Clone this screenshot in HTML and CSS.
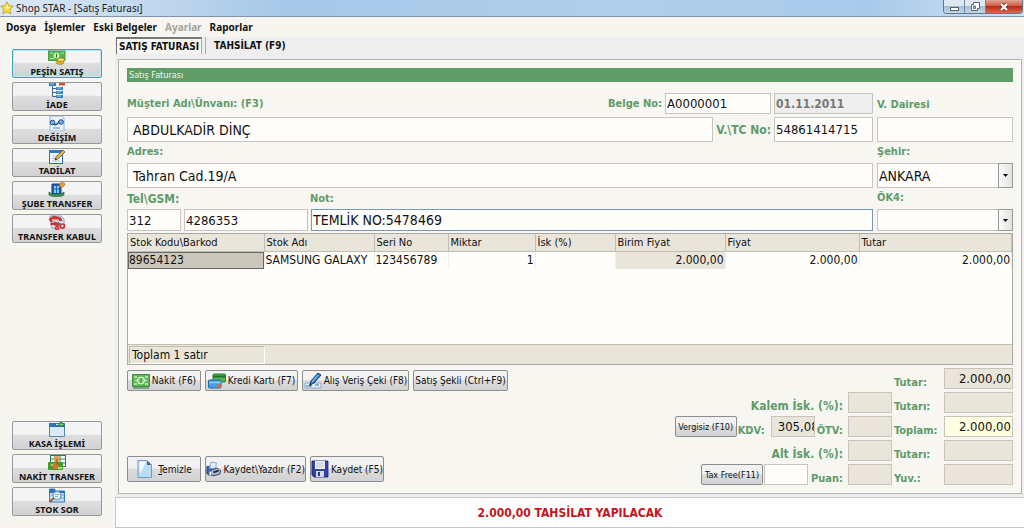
FILE: index.html
```html
<!DOCTYPE html>
<html lang="tr">
<head>
<meta charset="utf-8">
<title>Shop STAR - [Satış Faturası]</title>
<link rel="stylesheet" href="styles.css">
</head>
<body>
<div class="app">
  <header class="titlebar">
    <svg class="star" viewBox="0 0 14 14"><path d="M7 .8 8.900 4.700 13.300 5.200 10 8.400 10.900 12.900 6.800 10.800 2.800 12.800 3.600 8.300.6 5.200 5 4.600z" fill="#f6df3c" stroke="#b99a26" stroke-width=".8"/><path d="M7 3 8 5.600 10.500 6 8 7.500 5.500 8z" fill="#fff9a8"/></svg>
    <h1 class="title">Shop STAR - [Satış Faturası]</h1>
    <div class="winbtns">
      <button class="win" type="button" aria-label="Simge durumuna küçült"><svg viewBox="0 0 20 12"><rect x="6.500" y="6.500" width="8" height="3" fill="#fff" stroke="#566475"/></svg></button>
      <button class="win" type="button" aria-label="Önceki boyut"><svg viewBox="0 0 20 12"><path d="M8.500 1.500h6v6h-2v2h-6v-6h2z" fill="#fff" stroke="#566475"/><rect x="8.500" y="5" width="2" height="2.500" fill="#9fb4cc" stroke="#566475" stroke-width=".8"/></svg></button>
      <button class="win close" type="button" aria-label="Kapat"><svg viewBox="0 0 36 12"><path d="m15 3 6 6m0-6-6 6" stroke="#6b3030" stroke-width="3.600"/><path d="m15 3 6 6m0-6-6 6" stroke="#fff" stroke-width="2.200"/></svg></button>
    </div>
  </header>
  <nav class="menu">
    <button type="button">Dosya</button><button type="button">İşlemler</button><button type="button">Eski Belgeler</button><button type="button" disabled>Ayarlar</button><button type="button">Raporlar</button>
  </nav>
  <div class="body">
    <aside class="side">
      <div class="group">
        <button class="tool active" type="button"><svg viewBox="0 0 18 15"><rect x=".5" y="1" width="16.500" height="9.500" fill="#58b04f" stroke="#4c9a4a"/><path d="M2 3h3M2 8.500h4M13 3h3" stroke="#bfe8a8"/><circle cx="8.500" cy="5.500" r="3" fill="#c9efb5"/><path d="M8.500 3.500v4" stroke="#2b7a30"/><ellipse cx="12" cy="12.500" rx="4" ry="1.800" fill="#e9b72c" stroke="#9c7414" stroke-width=".7"/><ellipse cx="13" cy="9.800" rx="3.600" ry="1.700" fill="#ffe36a" stroke="#9c7414" stroke-width=".7"/></svg>PEŞİN SATIŞ</button>
        <button class="tool" type="button"><svg viewBox="0 0 18 15"><path d="M4.500 3v10.500H8M4.500 5.500H8M4.500 9.500H8" fill="none" stroke="#53657c"/><rect x="1" y="0" width="7" height="3" fill="#3478bd"/><rect x="11" y="0" width="6" height="2.500" fill="#c65338"/><rect x="8" y="4" width="7" height="3" fill="#347fc8"/><rect x="8" y="8" width="7" height="3" fill="#347fc8"/><rect x="8" y="12" width="7" height="3" fill="#347fc8"/><path d="M9 5h4M9 9h4M9 13h4M2 1h4" stroke="#9bd0fa"/></svg>İADE</button>
        <button class="tool" type="button"><svg viewBox="0 0 18 15"><path d="M2 0h12l2 2v13H2z" fill="#eaf5ff" stroke="#8eb4db"/><path d="M6 8c2 2 4-1 6-3" fill="none" stroke="#1c4689" stroke-width="1.600"/><circle cx="4.500" cy="6.500" r="2.300" fill="#7cb2ec" stroke="#1c4689"/><circle cx="13" cy="6" r="2.300" fill="#7cb2ec" stroke="#1c4689"/><path d="M5 12h7" stroke="#9dbfe1" stroke-width="2"/></svg>DEĞİŞİM</button>
        <button class="tool" type="button"><svg viewBox="0 0 18 15"><rect x="1.500" y="1.500" width="13" height="13" fill="#f3faff" stroke="#2a68b4"/><path d="M1 2.500h14" stroke="#2c77c7" stroke-width="3"/><path d="M4 7h7M4 9.500h5M4 12h8" stroke="#a8bfd4"/><path d="m7 11 1-3 7-7 2 2-7 7z" fill="#e3b44b" stroke="#735421" stroke-width=".8"/><path d="m7 11 .7-2 1.300 1.300z" fill="#222"/></svg>TADİLAT</button>
        <button class="tool" type="button"><svg viewBox="0 0 18 15"><path d="M4 2h9v10H4z" fill="#245eae" stroke="#173e79"/><path d="M6 4h5v7H6z" fill="#79d2ed"/><path d="M8.500 4v7M6 7h5" stroke="#2469b2"/><path d="M1 10c3 3 12 3 15 0v3c-3 2-12 2-15 0z" fill="#3a9b57" stroke="#1c6033" stroke-width=".7"/><path d="M11 4c1-3 3-3 3-4l3 2c-1 3-3 3-5 3z" fill="#e9a23b" stroke="#9d5d1b" stroke-width=".7"/></svg>ŞUBE TRANSFER</button>
        <button class="tool" type="button"><svg viewBox="0 0 18 15"><path d="M2 1h11l3 3v9H4z" fill="#e7effc" stroke="#8298c4"/><path d="m1 4 5-3 7 2 1 3-7-1-4 2zM2 9l5-2 6 2-2 2-5-1z" fill="#d8322c" stroke="#992424" stroke-width=".6"/><path d="M4 5h7" stroke="#fff"/><circle cx="14.500" cy="11" r="2" fill="none" stroke="#d8322c" stroke-width="1.700"/><circle cx="9" cy="13" r="1.500" fill="none" stroke="#d8322c" stroke-width="1.500"/><path d="m10 7 3 3" stroke="#6675a5" stroke-width="1.500"/></svg>TRANSFER KABUL</button>
      </div>
      <div class="group">
        <button class="tool" type="button"><svg viewBox="0 0 18 15"><path d="M1.500 1.500h15v13h-15z" fill="#d9ebfb" stroke="#5b83ab"/><path d="M1 1h7v2h9v2H1z" fill="#2d73ba"/><path d="M13 0v5M10.500 2.500h6" stroke="#237b34" stroke-width="2.600"/><path d="M13 1v3M11.500 2.500h4" stroke="#7cda62"/></svg>KASA İŞLEMİ</button>
        <button class="tool" type="button"><svg viewBox="0 0 18 15"><rect x="2.500" y=".5" width="15" height="11" fill="#f4fff8" stroke="#287950"/><path d="M7 1v10M12 1v10M3 4h14M3 8h14" stroke="#338463"/><rect x="0" y="7" width="15" height="8" rx="1" fill="#469c32"/><path d="M3 10h3M10 13h4" stroke="#b7df69" stroke-width="2"/><circle cx="9" cy="4" r="3" fill="#e69c42"/><circle cx="7.500" cy="11" r="3" fill="#db7133"/><path d="M9 4v6" stroke="#9b4c21"/></svg>NAKİT TRANSFER</button>
        <button class="tool" type="button"><svg viewBox="0 0 18 15"><path d="M1.500 1h5l1 2h9v11h-15z" fill="#bdddf6" stroke="#397bb9"/><path d="M1 1h6v2h10v2H1z" fill="#2873bd"/><path d="M12 7h4M12 10h4M3 7h3" stroke="#6a9dcc"/><circle cx="9" cy="7.500" r="4" fill="#e4f8ff" stroke="#75889b"/><path d="m6 10-4.500 4" stroke="#a3632e" stroke-width="2.200"/><path d="M7 6.500h4M7 8.500h3" stroke="#72b2da"/></svg>STOK SOR</button>
      </div>
    </aside>
    <div class="main">
      <div class="tabs" role="tablist">
        <button class="tab on" role="tab" aria-selected="true" type="button">SATIŞ FATURASI</button>
        <button class="tab" role="tab" aria-selected="false" type="button">TAHSİLAT (F9)</button>
      </div>
      <main class="panel">
        <h2 class="caption">Satış Faturası</h2>
        <form class="form">
          <div class="line head">
            <label class="grow" for="musteri">Müşteri Adı\Ünvanı: (F3)</label>
            <label for="belge">Belge No:</label><input class="w-doc" id="belge" value="A0000001">
            <input class="w-id date" aria-label="Tarih" value="01.11.2011" disabled>
          </div>
          <label class="low" for="daire">V. Dairesi</label>
          <div class="line tall">
            <input class="grow indent text" id="musteri" value="ABDULKADİR DİNÇ">
            <label class="wide" for="tc">V.\TC No:</label><input class="w-id" id="tc" value="54861414715">
          </div>
          <input class="tall" id="daire">
          <label class="cap" for="adres">Adres:</label><label class="cap" for="sehir">Şehir:</label>
          <input class="tall indent text" id="adres" value="Tahran Cad.19/A">
          <div class="combo tall"><select class="text" id="sehir"><option>ANKARA</option></select><span class="drop"><svg viewBox="0 0 5 3"><path d="M0 0h5L2.500 3z"/></svg></span></div>
          <div class="line cap"><label class="w-tel wide" for="tel">Tel\GSM:</label><label for="not">Not:</label></div>
          <label class="cap" for="ok4">ÖK4:</label>
          <div class="line short"><input class="w-area" id="tel" value="312"><input class="w-num" aria-label="Telefon numarası" value="4286353"><input class="grow focus text" id="not" value="TEMLİK NO:5478469"></div>
          <div class="combo short"><select id="ok4"><option></option></select><span class="drop"><svg viewBox="0 0 5 3"><path d="M0 0h5L2.500 3z"/></svg></span></div>
        </form>
        <div class="gridbox">
          <table class="grid">
            <colgroup><col class="c1"><col class="c2"><col class="c3"><col class="c4"><col class="c5"><col class="c6"><col class="c7"><col class="c8"></colgroup>
            <thead><tr><th>Stok Kodu\Barkod</th><th>Stok Adı</th><th>Seri No</th><th>Miktar</th><th>İsk (%)</th><th>Birim Fiyat</th><th>Fiyat</th><th>Tutar</th></tr></thead>
            <tbody><tr><td class="sel">89654123</td><td>SAMSUNG GALAXY</td><td>123456789</td><td class="num">1</td><td></td><td class="num shade">2.000,00</td><td class="num">2.000,00</td><td class="num">2.000,00</td></tr></tbody>
          </table>
          <div class="gridfoot"><span>Toplam 1 satır</span></div>
        </div>
        <div class="bottom">
          <div class="actions">
            <div class="btns">
              <button class="btn b1" type="button"><svg viewBox="0 0 18 16"><rect x=".5" y="1.500" width="17" height="12" fill="#5cb45c" stroke="#3f9145"/><path d="M2 4h3M2 11h3M13 4h3M13 11h3M3 7.500h12" stroke="#c4f0b2" stroke-width="1.500"/><circle cx="9" cy="7.500" r="3.500" fill="#8bd578" stroke="#eaffd9"/><path d="M9 5v5M1 15h16" stroke="#27712c"/></svg>Nakit (F6)</button>
              <button class="btn b2" type="button"><svg viewBox="0 0 18 16"><rect x="5" y="1" width="12.500" height="8" rx="1" fill="#53b848" stroke="#27802b"/><path d="M5 3.500h12" stroke="#226f32" stroke-width="2"/><rect x=".5" y="7" width="12.500" height="8" rx="1" fill="#4b9ce0" stroke="#2368aa"/><path d="M1 9.500h12" stroke="#8dd0ff" stroke-width="1.500"/><circle cx="11" cy="13" r="2" fill="#d66b3a"/></svg>Kredi Kartı (F7)</button>
              <button class="btn b3" type="button"><svg viewBox="0 0 18 16"><path d="M1 10h16v5H1z" fill="#e6f1fb" stroke="#8ba9c9"/><path d="M2 13h6M11 12h4" stroke="#3574b4"/><path d="m6 12 1-4 7-8 3 2-7 8z" fill="#357fce" stroke="#173f79"/><path d="m8 9 6-7" stroke="#9bd1ff"/><path d="m5 13 1-3 2 2z" fill="#1c355c"/></svg>Alış Veriş Çeki (F8)</button>
              <button class="btn b4" type="button">Satış Şekli (Ctrl+F9)</button>
            </div>
            <div class="btns big">
              <button class="btn b1 roomy" type="button"><svg viewBox="0 0 18 18"><path d="M2 .5h9l4.500 4.500v12.500H2z" fill="#b9dcf8" stroke="#719ac5"/><path d="M3 1.500h7L4 14z" fill="#f5fbff"/><path d="M11 .5v4.500h4.500z" fill="#47637e"/></svg><span><u>T</u>emizle</span></button>
              <button class="btn b5" type="button"><svg viewBox="0 0 18 18"><path d="M1 6h10v10H3l-2-2z" fill="#3e61b6" stroke="#263c79"/><path d="m4 8 2-7 6 1-1 7z" fill="#d9efff" stroke="#7c9ec6"/><path d="m6 10 7-2 4 3-1 4-8 2-3-3z" fill="#aab7ca" stroke="#303d58"/><path d="m8 12 6-2 1 2-6 2z" fill="#22304b"/><path d="M4 12h2v4H4z" fill="#fff"/></svg>Kaydet\Yazdır (F2)</button>
              <button class="btn b1" type="button"><svg viewBox="0 0 18 18"><path d="M1 1h16v16H3l-2-2z" fill="#3241a8" stroke="#1f266f"/><path d="M4 1h10v8H4z" fill="#f4f7fc"/><path d="M5 3h8M5 5h8M5 7h8" stroke="#b7c2d5"/><path d="M5 11h8v6H5z" fill="#d6dced"/><path d="M7 12h2v4H7z" fill="#28327f"/></svg>Kaydet (F5)</button>
            </div>
          </div>
          <div class="totals">
            <div class="trow"><label class="tl" for="t1">Tutar:</label><input class="sum" id="t1" value="2.000,00" readonly></div>
            <div class="trow"><label class="wide" for="k1">Kalem İsk. (%):</label><input class="pct" id="k1" readonly><label class="tl" for="t2">Tutarı:</label><input class="sum" id="t2" readonly></div>
            <div class="trow"><button class="mini" type="button">Vergisiz (F10)</button><label class="kdv" for="k2">KDV:</label><input class="kdvval" id="k2" value="305,08" readonly><label for="k3">ÖTV:</label><input class="pct" id="k3" readonly><label class="tl" for="t3">Toplam:</label><input class="sum yellow" id="t3" value="2.000,00" readonly></div>
            <div class="trow"><label class="wide" for="k4">Alt İsk. (%):</label><input class="pct" id="k4" readonly><label class="tl" for="t4">Tutarı:</label><input class="sum" id="t4" readonly></div>
            <div class="trow"><button class="mini" type="button">Tax Free(F11)</button><input class="tax" aria-label="Tax Free"><label for="k5">Puan:</label><input class="pct" id="k5" readonly><label class="tl" for="t5">Yuv.:</label><input class="sum" id="t5" readonly></div>
          </div>
        </div>
      </main>
      <footer class="status">2.000,00 TAHSİLAT YAPILACAK</footer>
    </div>
  </div>
</div>
</body>
</html>
```
FILE: styles.css
```css
* { box-sizing: border-box; }
body { margin: 0; font-family: "DejaVu Sans Condensed", "DejaVu Sans", sans-serif; font-size: 11px; color: #111; }
button, input, select { font: inherit; color: inherit; margin: 0; border-radius: 0; }
button { white-space: nowrap; }
.app { min-height: 100vh; display: flex; flex-direction: column; background: #f7f5f0; }

.titlebar { display: flex; align-items: center; height: 17px; gap: 2px; border-bottom: 1px solid #7f94aa; background: linear-gradient(90deg, #dce8f4 0, #c3d9ee 13%, #a6c8e8 28%, #b1cfec 60%, #a9cbea 85%, #cfe1f2 100%); }
.star { width: 14px; height: 14px; }
.title { flex: 1; margin: 0; font-family: "Noto Sans", sans-serif; font-size: 10px; line-height: 16px; font-weight: 400; color: #222; }
.winbtns { display: flex; align-self: flex-start; margin-right: 1px; height: 14px; border: 1px solid #64788d; border-top: 0; border-radius: 0 0 4px 4px; overflow: hidden; }
.win { width: 21px; padding: 0; border: 0; border-right: 1px solid #7188a0; background: linear-gradient(#dde8f3 45%, #a9bed5 50%, #c4d7e9); }
.win svg { display: block; width: 20px; height: 12px; }
.win.close { width: 36px; border: 0; background: linear-gradient(#e3a598, #cf5a44 45%, #b32d18 50%, #d66b4c); }
.win.close svg { width: 36px; }

.menu { display: flex; gap: 8px; height: 20px; padding-left: 6px; }
.menu button { padding: 0; border: 0; background: none; font-family: "Noto Sans", sans-serif; font-size: 10px; font-weight: 700; }
.menu button:disabled { color: #a5a39f; }

.body { flex: 1; display: flex; }
.side { width: 115px; padding: 12px 14px 12px 12px; display: flex; flex-direction: column; justify-content: space-between; }
.group { display: flex; flex-direction: column; gap: 4px; }
.tool { height: 29px; width: 90px; padding: 0; display: flex; flex-direction: column; align-items: center; justify-content: space-between; border: 1px solid #98989a; border-radius: 2px; background: linear-gradient(#f4f4f4 45%, #dededf 50%, #d2d2d4); font-family: "Noto Sans", sans-serif; font-size: 9px; line-height: 10px; font-weight: 700; }
.tool.active { border-color: #3fa3b8; box-shadow: inset 0 0 0 1px #c5e8ef; }
.tool svg { width: 18px; height: 15px; }

.main { flex: 1; min-width: 0; display: flex; flex-direction: column; background: #eee; }
.tabs { display: flex; height: 22px; padding-left: 1px; }
.tab { height: 17px; padding: 0 2px; border: 0; background: none; font-size: 10px; font-weight: 700; }
.tab.on { border: 1px solid #777; border-width: 2px 1px 0 1px; border-right-color: #aaa; background: #f7f6f2; margin-right: 3px; }
.tab + .tab { border-left: 1px solid #aaa; padding-left: 8px; }
.panel { flex: 1; display: flex; flex-direction: column; margin: 0 2px 3px 3px; padding: 8px; border: 1px solid #b4b2b0; background: #f7f6f1; box-shadow: inset 0 0 0 1px #fcfbf8; }
.caption { margin: 0 0 11px; padding: 0 2px; height: 14px; line-height: 14px; font-size: 9px; font-weight: 400; color: #eef8ed; background: #609c68; }

.form { display: grid; grid-template-columns: minmax(0, 1fr) 136px; column-gap: 4px; }
.line { display: flex; gap: 3px; align-items: center; }
label { color: #609a6a; font-size: 11px; font-weight: 700; white-space: nowrap; }
.wide { font-size: 12px; }
input, select { min-width: 0; height: 100%; padding: 0 1px; border: 1px solid #c6c4c0; background: #fffefb; font-size: 13px; outline: 0; }
.text { font-size: 14px; }
.indent { padding-left: 5px; }
.grow { flex: 1; }
.head { height: 21px; margin-bottom: 3px; }
.low { align-self: end; padding-bottom: 6px; }
.tall { height: 25px; }
.short { height: 22px; }
.cap { height: 21px; line-height: 20px; }
.w-doc { width: 106px; }
.w-id { width: 99px; }
.w-tel { width: 180px; }
.w-area { width: 54px; }
.w-num { width: 124px; }
.date { background: #eee; color: #777; font-weight: 700; font-size: 12px; }
.focus { border-color: #7699b8; }
.combo { position: relative; }
.combo select { width: 100%; appearance: none; opacity: 1; }
.drop { position: absolute; right: 0; top: 0; bottom: 0; width: 15px; display: grid; place-items: center; border: 1px solid #999; background: linear-gradient(90deg, #fafafa, #e2e2e2); pointer-events: none; }
.drop svg { width: 5px; height: 3px; }

.gridbox { flex: 1; display: flex; flex-direction: column; justify-content: space-between; margin: 2px 0 3px; border: 1px solid #aaa8a4; background: #fffefb; }
.grid { width: 100%; table-layout: fixed; border-collapse: collapse; font-size: 12px; }
.c1 { width: 136px; } .c2 { width: 110px; } .c3 { width: 74px; } .c4 { width: 87px; } .c5 { width: 80px; } .c6 { width: 110px; } .c7 { width: 134px; }
th { height: 17px; padding: 0 2px; text-align: left; font-size: 11px; font-weight: 400; line-height: 15px; background: #e9e5db; border-right: 1px solid #c2beb4; border-bottom: 1px solid #c2beb4; }
td { height: 18px; padding: 0 1px 0 1px; line-height: 16px; white-space: nowrap; overflow: hidden; border-right: 1px solid #f1efea; }
.num { text-align: right; }
.sel { background: #cbc7bd; box-shadow: inset 0 0 0 1px #666; }
.shade { background: #e9e5db; }
.gridfoot { height: 20px; padding: 1px; background: #e9e5db; border-top: 1px solid #c2beb4; font-size: 12px; }
.gridfoot span { display: block; width: 136px; padding-left: 2px; line-height: 16px; border: 1px solid #c2beb4; border-right-color: #fff; border-bottom-color: #fff; }

.bottom { display: flex; justify-content: space-between; }
.actions { display: flex; flex-direction: column; justify-content: space-between; padding: 2px 0 3px; }
.btns { display: flex; gap: 4px; }
.btn { height: 21px; padding: 0; display: flex; align-items: center; justify-content: center; gap: 2px; border: 1px solid #8d8d8f; border-radius: 2px; background: linear-gradient(#f2f2f2 45%, #dcdcdd 50%, #d2d2d4); font-size: 10px; }
.btn svg { width: 18px; height: 16px; }
.big .btn { height: 26px; }
.big svg { height: 18px; }
.big .roomy { gap: 4px; }
.b1 { width: 74px; } .b2 { width: 93px; } .b3 { width: 107px; } .b4 { width: 95px; } .b5 { width: 101px; }
.totals { display: flex; flex-direction: column; gap: 3px; }
.trow { height: 21px; display: flex; justify-content: flex-end; align-items: stretch; }
.trow label { align-self: flex-end; line-height: 13px; margin-right: 5px; }
.trow .tl { width: 50px; margin: 0 0 0 2px; }
.trow .kdv { margin: 0 6px 0 1px; }
.trow input { background: #e9e5db; border-color: #c8c4ba; }
.pct { width: 44px; }
.sum { width: 69px; text-align: right; }
.kdvval { width: 44px; margin-right: 2px; }
.trow .kdvval { padding: 0 0 0 6px; }
.trow .yellow { background: #ffffe1; }
.trow .tax { width: 44px; margin: 0 3px 0 1px; background: #fffefb; }
.mini { width: 62px; padding: 0; border: 1px solid #8d8d8f; border-radius: 2px; background: linear-gradient(#f2f2f2 45%, #dcdcdd 50%, #d2d2d4); font-size: 9px; }
.status { height: 31px; display: grid; place-items: center; border: 1px solid #c4c4c4; border-right: 0; background: #fff; color: #c4161c; font-size: 12px; font-weight: 700; }
```
